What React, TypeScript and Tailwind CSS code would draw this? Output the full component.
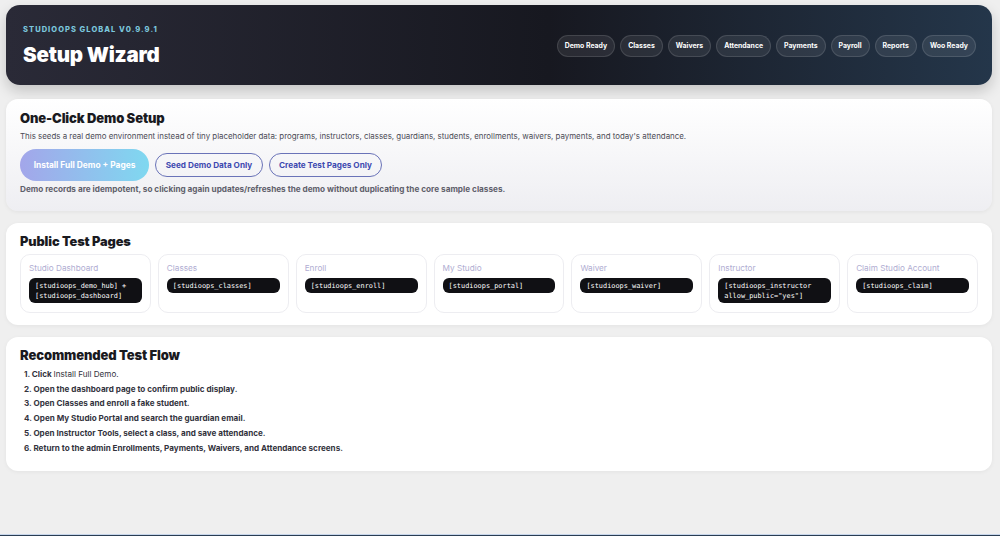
import React from "react";

const pills = ["Demo Ready", "Classes", "Waivers", "Attendance", "Payments", "Payroll", "Reports", "Woo Ready"];

const pages: { label: string; code: string[] }[] = [
  { label: "Studio Dashboard", code: ["[studioops_demo_hub] +", "[studioops_dashboard]"] },
  { label: "Classes", code: ["[studioops_classes]"] },
  { label: "Enroll", code: ["[studioops_enroll]"] },
  { label: "My Studio", code: ["[studioops_portal]"] },
  { label: "Waiver", code: ["[studioops_waiver]"] },
  { label: "Instructor", code: ["[studioops_instructor", 'allow_public="yes"]'] },
  { label: "Claim Studio Account", code: ["[studioops_claim]"] },
];

const steps = [
  "Open the dashboard page to confirm public display.",
  "Open Classes and enroll a fake student.",
  "Open My Studio Portal and search the guardian email.",
  "Open Instructor Tools, select a class, and save attendance.",
  "Return to the admin Enrollments, Payments, Waivers, and Attendance screens.",
];

export default function App() {
  return (
    <div className="h-[536px] bg-[#efefef] flex flex-col font-['Inter',sans-serif] text-[#1a1a1f] overflow-hidden">
      <div className="flex flex-col gap-3 pt-[5px] pl-[6px] pr-[8px]">
        {/* Header */}
        <div className="h-[80px] mb-[2px] rounded-[14px] bg-[linear-gradient(90deg,#2a2a37_0%,#171820_55%,#24364a_100%)] shadow-[0_6px_14px_rgba(0,0,0,0.18)] flex items-center justify-between pl-[17px] pr-[16px]">
          <div className="flex flex-col">
            <div className="text-[7.5px] font-extrabold tracking-[0.14em] text-[#7cc7dd] leading-none mt-[1px]">
              STUDIOOPS GLOBAL V0.9.9.1
            </div>
            <div className="text-[20.5px] font-black text-white leading-none mt-[12px] tracking-[-0.01em]">
              Setup Wizard
            </div>
          </div>
          <div className="flex items-center gap-[5px] mt-[2px]">
            {pills.map((p) => (
              <div
                key={p}
                className="h-[22px] px-[7px] rounded-full bg-[rgba(255,255,255,0.08)] border border-[rgba(255,255,255,0.12)] text-white text-[6.9px] font-bold flex items-center"
              >
                {p}
              </div>
            ))}
          </div>
        </div>

        {/* One-click */}
        <div className="h-[112px] rounded-[12px] bg-[linear-gradient(180deg,#ffffff_0%,#eeeef2_100%)] shadow-[0_1px_4px_rgba(0,0,0,0.06)] px-[14px] pt-[11px]">
          <div className="text-[13px] font-black leading-[16px] tracking-[-0.01em]">One-Click Demo Setup</div>
          <div className="text-[7.9px] text-[#4a4a55] mt-[3px] leading-[14px]">
            This seeds a real demo environment instead of tiny placeholder data: programs, instructors, classes, guardians, students, enrollments, waivers, payments, and today's attendance.
          </div>
          <div className="flex items-center gap-[6px] mt-[6px]">
            <div className="h-[32px] w-[129px] rounded-full bg-[linear-gradient(90deg,#a3a6ea_0%,#7fd8f0_100%)] text-white text-[8.4px] font-bold flex items-center justify-center whitespace-nowrap">
              Install Full Demo + Pages
            </div>
            <div className="h-[24px] w-[108px] rounded-full border border-[#6a73b8] text-[#3e4ab0] text-[8.2px] font-bold flex items-center justify-center whitespace-nowrap">
              Seed Demo Data Only
            </div>
            <div className="h-[24px] w-[113px] rounded-full border border-[#6a73b8] text-[#3e4ab0] text-[8.2px] font-bold flex items-center justify-center whitespace-nowrap">
              Create Test Pages Only
            </div>
          </div>
          <div className="text-[8.2px] font-bold text-[#60606b] mt-[2px] leading-[12px]">
            Demo records are idempotent, so clicking again updates/refreshes the demo without duplicating the core sample classes.
          </div>
        </div>

        {/* Public test pages */}
        <div className="h-[102px] rounded-[12px] bg-white shadow-[0_1px_4px_rgba(0,0,0,0.05)] px-[14px] pt-[10px]">
          <div className="text-[12.8px] font-black leading-[17px] tracking-[-0.01em]">Public Test Pages</div>
          <div className="grid grid-cols-7 gap-[7px] mt-[4px]">
            {pages.map((pg) => (
              <div key={pg.label} className="h-[59px] rounded-[10px] border border-[#ededf1] px-[8px] pt-[8px]">
                <div className="text-[8.2px] text-[#b0add2] leading-[10px] whitespace-nowrap">{pg.label}</div>
                <div className="mt-[5px] rounded-[6px] bg-[#101014] text-white font-['DejaVu_Sans_Mono',monospace] text-[6.9px] leading-[10px] px-[6px] py-[2.5px]">
                  {pg.code.map((c) => (
                    <div key={c} className="whitespace-nowrap">{c}</div>
                  ))}
                </div>
              </div>
            ))}
          </div>
        </div>

        {/* Recommended flow */}
        <div className="h-[134px] rounded-[12px] bg-white shadow-[0_1px_4px_rgba(0,0,0,0.05)] px-[14px] pt-[9px]">
          <div className="text-[13px] font-black leading-[18px] tracking-[-0.01em]">Recommended Test Flow</div>
          <ol className="mt-[3px] pl-[4px] text-[8.1px] font-bold text-[#33333d] leading-[14.7px]">
            <li>
              1. Click <span className="font-normal">Install Full Demo.</span>
            </li>
            {steps.map((s, i) => (
              <li key={s}>
                {i + 2}. {s}
              </li>
            ))}
          </ol>
        </div>
      </div>
      <div className="flex-1" />
      <div className="h-[1px] bg-[#c6d5ea]" />
      <div className="h-[1px] bg-[#2a3d52]" />
    </div>
  );
}
